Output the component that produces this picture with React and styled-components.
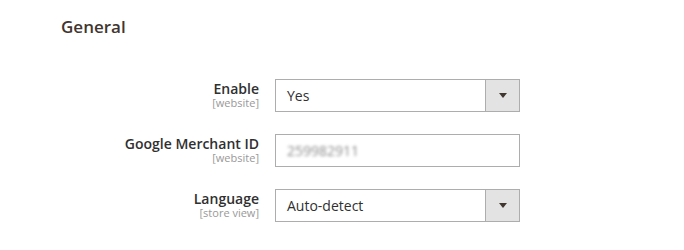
import React from "react";
import styled, { createGlobalStyle } from "styled-components";

const Global = createGlobalStyle`
  html, body { margin: 0; padding: 0; background: #fff; }
  body { font-family: "Open Sans", "Noto Sans", sans-serif; color: #303030; }
`;

const Page = styled.div`
  width: 684px;
  height: 250px;
  box-sizing: border-box;
  padding: 15px 0 0 61px;
  overflow: hidden;
`;

const Heading = styled.h2`
  margin: 0;
  font-size: 17px;
  line-height: 23px;
  font-weight: 600;
  color: #41362f;
`;

const Form = styled.div`
  margin-top: 41px;
  display: grid;
  grid-template-columns: 198px 245px;
  column-gap: 16px;
  row-gap: 22px;
`;

const Label = styled.div`
  display: flex;
  flex-direction: column;
  align-items: flex-end;
  text-align: right;
  padding-top: 1px;
`;

const LabelText = styled.span`
  font-size: 14px;
  line-height: 17px;
  font-weight: 600;
  color: #303030;
`;

const Scope = styled.span`
  font-size: 11px;
  line-height: 11px;
  color: #999;
`;

const Box = styled.div`
  height: 33px;
  box-sizing: border-box;
  border: 1px solid #adadad;
  background: #fff;
  display: flex;
  align-items: stretch;
`;

const Value = styled.span`
  flex: 1;
  display: flex;
  align-items: center;
  padding-left: 11px;
  font-size: 14px;
  color: ${(p) => (p.$blurred ? "#8a8a8a" : "#303030")};
  filter: ${(p) => (p.$blurred ? "blur(1.4px)" : "none")};
`;

const ArrowButton = styled.span`
  width: 33px;
  border-left: 1px solid #adadad;
  background: #e3e3e3;
  display: flex;
  align-items: center;
  justify-content: center;
  &::after {
    content: "";
    width: 0;
    height: 0;
    border-left: 4px solid transparent;
    border-right: 4px solid transparent;
    border-top: 5px solid #41362f;
  }
`;

const Field = ({ label, scope, value, select, blurred }) => (
  <>
    <Label>
      <LabelText>{label}</LabelText>
      <Scope>{scope}</Scope>
    </Label>
    <Box>
      <Value $blurred={blurred}>{value}</Value>
      {select && <ArrowButton />}
    </Box>
  </>
);

export default function App() {
  return (
    <>
      <Global />
      <Page>
        <Heading>General</Heading>
        <Form>
          <Field label="Enable" scope="[website]" value="Yes" select />
          <Field label="Google Merchant ID" scope="[website]" value="259982911" blurred />
          <Field label="Language" scope="[store view]" value="Auto-detect" select />
        </Form>
      </Page>
    </>
  );
}
